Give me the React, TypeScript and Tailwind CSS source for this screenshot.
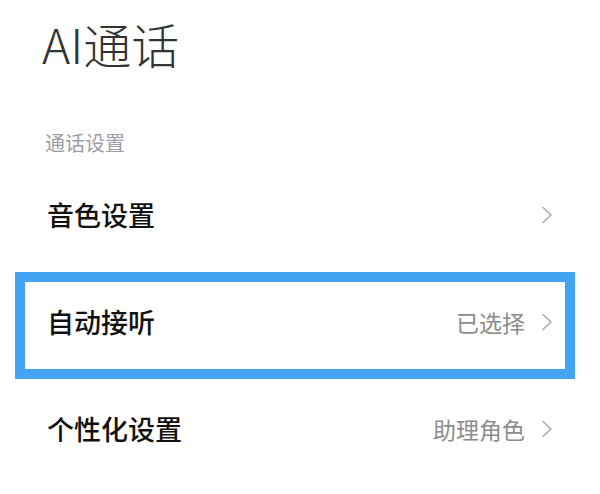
import React from "react";

type Row = {
  title: string;
  value?: string;
  selected?: boolean;
};

const rows: Row[] = [
  { title: "音色设置" },
  { title: "自动接听", value: "已选择", selected: true },
  { title: "个性化设置", value: "助理角色" },
];

const Chevron = () => (
  <svg width="12" height="18" viewBox="0 0 12 18" fill="none" className="shrink-0">
    <path d="M2 1.5 L10 9 L2 16.5" stroke="#ababab" strokeWidth="1.6" strokeLinecap="round" strokeLinejoin="round" />
  </svg>
);

export default function App() {
  return (
    <div
      className="w-[600px] h-[494px] overflow-hidden bg-white"
      style={{ fontFamily: '"Noto Sans CJK SC", "Noto Sans", sans-serif' }}
    >
      {/* 页面标题 */}
      <h1 className="pt-[19px] pl-[42px] text-[48px] leading-[48px] font-light text-[#333333]">
        AI通话
      </h1>

      <p className="mt-[66px] pl-[45px] text-[20px] leading-[20px] text-[#9d9da8]">
        通话设置
      </p>

      <div className="mt-[12px] pl-[15px] pr-[25px]">
        {rows.map((row) => (
          <div
            key={row.title}
            className={`flex h-[107px] items-center justify-between border-[10px] pb-[8px] pl-[22px] pr-[12px] ${
              row.selected ? "border-[#44a4f4]" : "border-transparent"
            }`}
          >
            <span className="text-[27px] leading-[30px] font-medium text-[#111111]">
              {row.title}
            </span>
            <div className="flex items-center gap-[16px]">
              {row.value && (
                <span className="text-[23px] leading-[26px] text-[#8c8c8c]">
                  {row.value}
                </span>
              )}
              <Chevron />
            </div>
          </div>
        ))}
      </div>
    </div>
  );
}
